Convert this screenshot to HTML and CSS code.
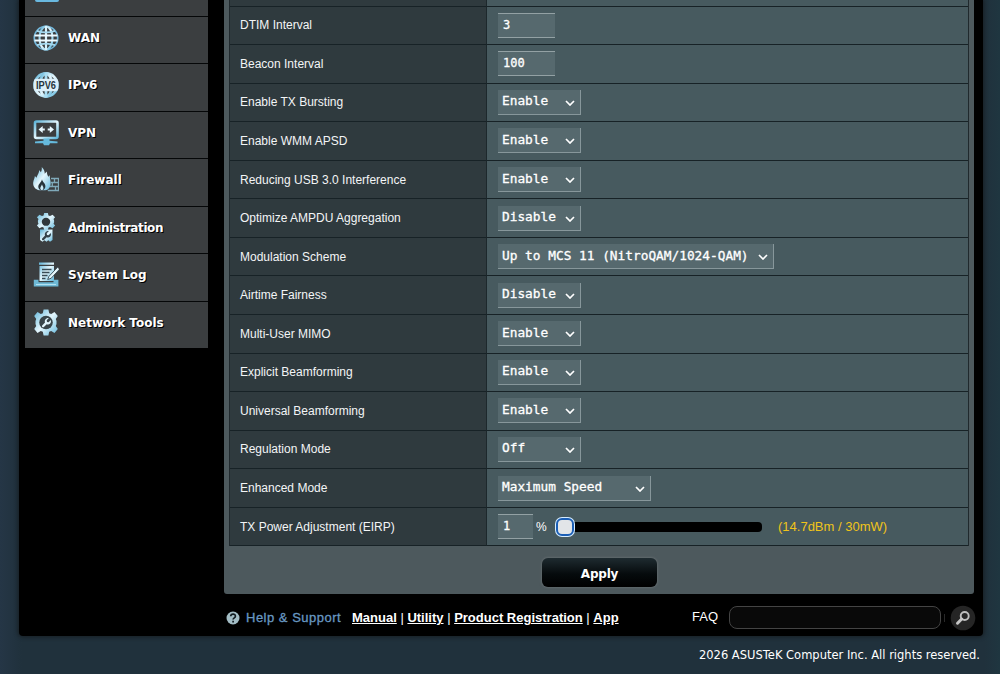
FILE: index.html
```html
<!DOCTYPE html>
<html lang="en">
<head>
    <meta charset="UTF-8">
    <title>ASUS Wireless Router - Professional</title>
    <link rel="stylesheet" href="styles.css">
</head>
<body>
    <svg width="0" height="0" class="defs">
        <defs>
            <linearGradient id="ice" x1="0" y1="0" x2="1" y2="1">
                <stop offset="0" stop-color="#5fb4d8"/>
                <stop offset=".5" stop-color="#e4f6fd"/>
                <stop offset="1" stop-color="#62b8dc"/>
            </linearGradient>
            <path id="gear" d="M10.6 0h4.800l.8 3.700 2 .9 3.300-2.100 3.300 4.100-2 2.800.7 2.200v2.800l-.7 2.200 2 2.800-3.300 4.100-3.300-2.100-2 .9-.8 3.700h-4.800l-.8-3.700-2-.9-3.300 2.100-3.300-4.100 2-2.800-.7-2.200v-2.800l.7-2.200-2-2.800 3.300-4.100 3.300 2.100 2-.9z"/>
            <path id="wrench" d="M7.600.6 5.400 2.800l.3 1.600 1.600.3L9.500 2.600c.7 2-.4 4.200-2.500 4.400-.6.1-1.100 0-1.600-.2L2.600 9.500c-1 .9-2.600-.6-1.700-1.600l2.800-2.800C2.900 2.600 4.900.2 7.600.6z"/>
        </defs>
    </svg>
    <div class="wrapper">
        <div class="main">
            <ul class="menu">
                <li class="menu_first"><i></i></li>
                <li>
                    <svg width="26" height="26" viewBox="0 0 26 26" fill="none" stroke="url(#ice)">
                        <circle cx="13" cy="13" r="11.700" stroke-width="1.700" stroke="#72b6da"/>
                        <ellipse cx="13" cy="13" rx="6.500" ry="11.500" stroke-width="2.100"/>
                        <path d="M13 1v24.010" stroke="#d8f2fc" stroke-width="2.200"/>
                        <path d="M4 5.800Q13 9 22 5.800M4 20.200Q13 17 22 20.200" stroke="#a5d8ee" stroke-width="1.800"/>
                        <path d="M1.500 10.500h23M1.500 15.500h23" stroke="#eefaff" stroke-width="2.200"/>
                    </svg>
                    <span>WAN</span>
                </li>
                <li>
                    <svg width="26" height="26" viewBox="0 0 26 26">
                        <g fill="none" stroke="url(#ice)" stroke-width="2.800">
                            <circle cx="13" cy="13" r="11.500"/>
                            <ellipse cx="13" cy="13" rx="6" ry="11.500"/>
                            <path d="M13 1v24" stroke="#a9ddf2"/>
                        </g>
                        <rect x=".8" y="6.800" width="24.400" height="12.400" rx="3" fill="#dceff9"/>
                        <text x="3" y="17" textLength="20" lengthAdjust="spacingAndGlyphs" class="ipv6">IPV6</text>
                    </svg>
                    <span>IPv6</span>
                </li>
                <li>
                    <svg width="26" height="26" viewBox="0 0 26 26">
                        <rect x="2" y="1.500" width="22.500" height="16.500" rx="1.500" fill="none" stroke="url(#ice)" stroke-width="2.600"/>
                        <path d="M5.500 9.500l4.200-3.500v2.400h2.100v2.200H9.700V13zM21 9.500L16.800 6v2.400h-2.100v2.200h2.100V13z" fill="#e8f8ff"/>
                        <path d="M10.500 18.500h6v2.300l8 .8v1.700H17l-1 1.900h-5l-1-1.900H2v-1.700l8.500-.8z" fill="#65b9dc"/>
                    </svg>
                    <span>VPN</span>
                </li>
                <li>
                    <svg width="26" height="26" viewBox="0 0 26 26">
                        <path d="M8.700 0c2.200 2 3.200 4.600 3 6.800l2-2.300c.4 2.300.4 3.500 1.800 5.200l1.500-1.600c-.7 3.200 1 5 .6 9.100-.3 3.800-2.800 6-6.600 6.100H6.400C2.100 22.500-.2 19.500.2 15.400.5 12.900 1.600 11.700 1.900 9l1.600 1.700C4.600 7.500 6.300 5.600 6.200 3l1.700 2.200C8.800 3.500 9 1.700 8.700 0z" fill="url(#ice)"/>
                        <path d="M9 12.200c.3 2.700 3.700 4.200 3.400 7.300-.1 2-1.600 3.700-3.600 3.700-2.100 0-3.500-1.600-3.500-3.500 0-2.900 3-4.200 3.700-7.500z" fill="#27343b"/>
                        <path d="M9 17.300c.2 1.700 1.500 2.300 1.400 3.900-.1 1.100-.7 1.800-1.500 1.800-1 0-1.600-.8-1.600-1.800 0-1.500 1.400-2.200 1.700-3.900z" fill="#cfeefa"/>
                        <path d="M18 11.500h7.500v12H14.800M17.600 15.500h8M16.800 19.500h8.700M21.500 11.500v4M19.300 15.500v4M22.500 19.500v4" fill="none" stroke="#7fa9b9" stroke-width="1.300"/>
                    </svg>
                    <span>Firewall</span>
                </li>
                <li>
                    <svg width="26" height="30" viewBox="0 0 26 30">
                        <g transform="translate(3 0) scale(.77 .65)">
                            <use href="#gear" fill="url(#ice)"/>
                            <ellipse cx="13" cy="13.500" rx="5.500" ry="6.300" fill="#30383c"/>
                        </g>
                        <path d="M7 16.500h12.500V27l-2.500 1.700-1.700-1.500-1.800 1.600-2-1.500-2 1.500L7 27z" fill="url(#ice)"/>
                        <use href="#wrench" transform="translate(8.300 17.500)" fill="#34424a"/>
                    </svg>
                    <span class="tight">Administration</span>
                </li>
                <li>
                    <svg width="26" height="26" viewBox="0 0 26 26">
                        <path d="M6 .5h15v2.200H6zM6.500 4H21v15H6.500z" fill="url(#ice)"/>
                        <path d="M9 7.500h9.500M9 10.500h7.500M9 13.500h5.500M9 16.500h3.500" stroke="#394b55" stroke-width="1.300"/>
                        <path d="M24.800 5L16 14.300l-1.300 3.200 3.400-1.200L26 7.800" fill="#e6f6fc" stroke="#394b55" stroke-width=".9"/>
                        <path d="M.8 17.800h4.700v2.400h15v-2.400h4.900v6.700H.8z" fill="#6eb9d6"/>
                        <path d="M3 22.500h20" stroke="#b2e1f1"/>
                    </svg>
                    <span>System Log</span>
                </li>
                <li>
                    <svg width="26" height="27" viewBox="0 0 26 26">
                        <use href="#gear" fill="url(#ice)"/>
                        <circle cx="13" cy="13" r="6.800" fill="#39454a"/>
                        <use href="#wrench" transform="translate(8.300 8)" fill="#e2f5fc"/>
                    </svg>
                    <span>Network Tools</span>
                </li>
            </ul>

            <div class="content">
                <table class="form_table">
                    <tr class="cut"><th></th><td></td></tr>
                    <tr><th>DTIM Interval</th><td><div class="line"><span class="input">3</span></div></td></tr>
                    <tr><th>Beacon Interval</th><td><div class="line"><span class="input">100</span></div></td></tr>
                    <tr><th>Enable TX Bursting</th><td><div class="select">Enable<svg viewBox="0 0 10 6"><path d="M1 1l4 4 4-4"/></svg></div></td></tr>
                    <tr><th>Enable WMM APSD</th><td><div class="select">Enable<svg viewBox="0 0 10 6"><path d="M1 1l4 4 4-4"/></svg></div></td></tr>
                    <tr><th>Reducing USB 3.0 Interference</th><td><div class="select">Enable<svg viewBox="0 0 10 6"><path d="M1 1l4 4 4-4"/></svg></div></td></tr>
                    <tr><th>Optimize AMPDU Aggregation</th><td><div class="select">Disable<svg viewBox="0 0 10 6"><path d="M1 1l4 4 4-4"/></svg></div></td></tr>
                    <tr><th>Modulation Scheme</th><td><div class="select wide">Up to MCS 11 (NitroQAM/1024-QAM)<svg viewBox="0 0 10 6"><path d="M1 1l4 4 4-4"/></svg></div></td></tr>
                    <tr><th>Airtime Fairness</th><td><div class="select">Disable<svg viewBox="0 0 10 6"><path d="M1 1l4 4 4-4"/></svg></div></td></tr>
                    <tr><th>Multi-User MIMO</th><td><div class="select">Enable<svg viewBox="0 0 10 6"><path d="M1 1l4 4 4-4"/></svg></div></td></tr>
                    <tr><th>Explicit Beamforming</th><td><div class="select">Enable<svg viewBox="0 0 10 6"><path d="M1 1l4 4 4-4"/></svg></div></td></tr>
                    <tr><th>Universal Beamforming</th><td><div class="select">Enable<svg viewBox="0 0 10 6"><path d="M1 1l4 4 4-4"/></svg></div></td></tr>
                    <tr><th>Regulation Mode</th><td><div class="select">Off<svg viewBox="0 0 10 6"><path d="M1 1l4 4 4-4"/></svg></div></td></tr>
                    <tr><th>Enhanced Mode</th><td><div class="select medium">Maximum Speed<svg viewBox="0 0 10 6"><path d="M1 1l4 4 4-4"/></svg></div></td></tr>
                    <tr>
                        <th>TX Power Adjustment (EIRP)</th>
                        <td>
                            <div class="line">
                                <span class="input small">1</span>
                                <span class="percent">%</span>
                                <div class="slider"><i class="handle"></i></div>
                                <span class="power">(14.7dBm / 30mW)</span>
                            </div>
                        </td>
                    </tr>
                </table>
                <div class="apply_row"><button class="button_gen">Apply</button></div>
            </div>
        </div>

        <div class="bottom">
            <svg class="help_icon" width="14" height="14" viewBox="0 0 14 14">
                <circle cx="7" cy="7" r="6.500" fill="#a3bdc5"/>
                <path d="M4.700 5.300c.2-3 4.800-2.800 4.700-.1 0 1.700-2.300 1.600-2.300 3.400M7.100 9.700v1.700" fill="none" stroke="#111b20" stroke-width="1.700"/>
            </svg>
            <span class="help">Help &amp; Support</span>
            <div class="links"><a>Manual</a> | <a>Utility</a> | <a>Product Registration</a> | <a>App</a></div>
            <span class="faq">FAQ</span>
            <div class="search_box"></div>
            <i class="sep"></i>
            <svg class="search_btn" width="26" height="26" viewBox="0 0 26 26">
                <circle cx="13" cy="13" r="12.300" fill="#252525"/>
                <circle cx="14.700" cy="11" r="4" fill="none" stroke="#bdbdbd" stroke-width="1.900"/>
                <path d="M11.700 14l-4.200 4.200" stroke="#c6c6c6" stroke-width="3" stroke-linecap="round"/>
            </svg>
        </div>
    </div>
    <div class="copyright">2026 ASUSTeK Computer Inc. All rights reserved.</div>
</body>
</html>
```

FILE: styles.css
```css
* {
    box-sizing: border-box;
}
body {
    margin: 0;
    height: 674px;
    overflow: hidden;
    background: linear-gradient(90deg, #253646 0, #20313c 22px, #20313c 985px, #1f3640 1000px);
    font-family: "Liberation Sans", Arial, sans-serif;
    color: #fff;
}
.defs {
    position: absolute;
}
.wrapper {
    width: 964px;
    height: 636px;
    margin-left: 19px;
    background: #000;
    border-radius: 0 0 4px 4px;
    box-shadow: 0 0 4px 1px #171d22;
}
.main {
    display: flex;
    height: 594px;
}

/* left menu */
.menu {
    list-style: none;
    width: 183px;
    margin: 0 16px 0 6px;
    padding: 0;
}
.menu li {
    display: flex;
    align-items: center;
    height: 47.5px;
    padding: 0 0 4px 8px;
    background: #3b3e40;
    border-top: 1px solid #050708;
    font: bold 12px "DejaVu Sans", Verdana, sans-serif;
    text-shadow: 1px 1px 0 #000;
}
.menu li svg {
    flex: none;
    width: 26px;
    margin-right: 9px;
}
.menu li .tight {
    letter-spacing: -0.4px;
}
.menu .menu_first {
    height: 15.5px;
    border: 0;
    padding: 0 0 0 10px;
    align-items: flex-start;
}
.menu_first i {
    width: 24px;
    height: 2px;
    background: #69b8df;
    border-radius: 0 0 2px 2px;
}
.ipv6 {
    font: bold 10.5px "Liberation Sans", Arial, sans-serif;
    fill: #26343c;
    text-shadow: none;
}

/* settings */
.content {
    width: 750px;
    padding-left: 5px;
    background: #4d595d;
    border-radius: 0 0 3px 3px;
}
.form_table {
    width: 740px;
    border-spacing: 0;
    table-layout: fixed;
    border-left: 1px solid #20292d;
    border-right: 1px solid #20292d;
    font-size: 12px;
}
.form_table tr {
    height: 38.57px;
}
.form_table .cut {
    height: 6.5px;
}
.form_table th {
    width: 257px;
    padding: 0 0 0 10px;
    background: #2f3a3e;
    border-right: 1px solid #1d282c;
    border-bottom: 1px solid #172226;
    color: #f3f5f6;
    font-weight: normal;
    text-align: left;
}
.form_table td {
    padding: 0 0 0 11px;
    background: #475a5f;
    border-bottom: 1px solid #172226;
}
.line {
    display: flex;
    align-items: center;
}
.select,
.input {
    display: flex;
    align-items: center;
    height: 25px;
    background: #56696e;
    font-family: "DejaVu Sans Mono", "Lucida Console", monospace;
    -webkit-text-stroke: 0.3px #fff;
    white-space: nowrap;
}
.select {
    justify-content: space-between;
    width: 83px;
    padding: 0 5px 2px 4px;
    border: solid #87979b;
    border-width: 0 1.5px 1px 0;
    font-size: 12.8px;
}
.select.medium {
    width: 153px;
}
.select.wide {
    width: 276px;
}
.select svg {
    width: 10px;
    height: 6px;
    margin-top: 4px;
    fill: none;
    stroke: #fff;
    stroke-width: 1.7;
}
.input {
    width: 57px;
    padding: 0 0 1px 5px;
    border: solid #93a1a4;
    border-width: 1px 0;
    font-size: 12px;
}
.input.small {
    width: 35px;
}
.percent {
    width: 10px;
    margin: 0 11px 0 3px;
}
.slider {
    width: 205px;
    height: 10px;
    background: #000;
    border-radius: 4px;
}
.handle {
    display: block;
    width: 18px;
    height: 18px;
    margin: -4px 0 0 -1px;
    background: #e2e5e8;
    border: 2px solid #1b5eb5;
    border-radius: 6px;
    box-shadow: 0 0 0 1px #d5ecff;
}
.power {
    margin: -1px 0 0 16px;
    color: #f0c419;
    font-size: 13px;
}
.apply_row {
    padding: 12px 0 0 313px;
}
.button_gen {
    display: block;
    width: 115px;
    height: 29px;
    padding: 2px 0 0;
    background: linear-gradient(#1e2b30, #060b0d 55%, #000);
    border: 0;
    border-radius: 6px;
    box-shadow: 0 0 2px 1px #60696c;
    color: #fff;
    font: bold 12px "DejaVu Sans", Verdana, sans-serif;
    letter-spacing: -0.2px;
}

/* footer */
.bottom {
    display: flex;
    align-items: center;
    height: 42px;
    padding: 5px 0 0 207px;
    font-size: 13px;
}
.help {
    width: 102px;
    margin: 0 5px 0 6px;
    color: #6898c2;
    font-size: 13px;
    letter-spacing: 0.5px;
    -webkit-text-stroke: 0.3px #6898c2;
    white-space: nowrap;
}
.links {
    width: 268px;
    margin-left: -1px;
    white-space: nowrap;
}
.links a {
    font-weight: bold;
    text-decoration: underline;
}
.faq {
    width: 27px;
    margin: -2px 10px 0 72px;
}
.search_box {
    width: 212px;
    height: 23px;
    background: #090909;
    border: 1px solid #444;
    border-radius: 8px;
}
.sep {
    width: 1px;
    height: 8px;
    margin: 0 5px 0 3px;
    background: #292929;
}
.copyright {
    padding: 12px 20px 0 0;
    text-align: right;
    font: 11.5px "DejaVu Sans", Verdana, sans-serif;
}
```
